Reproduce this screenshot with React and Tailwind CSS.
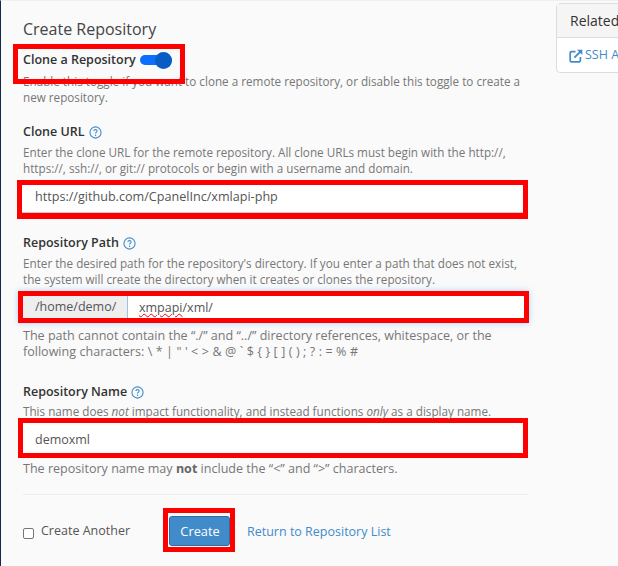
function HelpIcon() {
  return (
    <svg viewBox="0 0 14 14" className="ml-[4px] h-[13px] w-[13px] text-[#428bca]" fill="none">
      <circle cx="7" cy="7" r="6" stroke="currentColor" strokeWidth="1.2" />
      <path d="M5.2 5.5c0-1 .8-1.6 1.8-1.6s1.8.6 1.8 1.5c0 1.4-1.8 1.3-1.8 2.8" stroke="currentColor" strokeWidth="1.1" />
      <circle cx="7" cy="10" r=".8" fill="currentColor" />
    </svg>
  );
}

function LinkIcon() {
  return (
    <svg viewBox="0 0 14 14" className="mr-[2px] h-[14px] w-[14px] shrink-0" fill="none" stroke="currentColor">
      <path d="M6.5 2.6H2.4a1.2 1.2 0 0 0-1.2 1.2v7.8a1.2 1.2 0 0 0 1.2 1.2h7.8a1.2 1.2 0 0 0 1.2-1.2V8" strokeWidth="1.7" />
      <path d="M5.4 8.6 11.6 2.4" strokeWidth="2" />
      <path d="M8 .7h5.3V6z" fill="currentColor" stroke="none" />
    </svg>
  );
}

function FieldLabel({ children }) {
  return (
    <div className="flex items-center text-[12.5px] leading-[18px] font-semibold whitespace-nowrap text-[#333]">
      {children}
      <HelpIcon />
    </div>
  );
}

function Hint({ children, className = '' }) {
  return <p className={`leading-4 whitespace-nowrap text-[#777] ${className}`}>{children}</p>;
}

export default function App() {
  return (
    <div className="relative h-[566px] w-[618px] overflow-hidden border-t border-l border-t-[#f0f0f0] border-l-[#16284a] bg-[#fafafa] font-['Open_Sans',sans-serif]">
      <div className="flex items-start">
        <main className="ml-[22px] w-[505px] shrink-0 pt-[18px]">
          <h1 className="text-[16px] leading-5 text-[#444]">Create Repository</h1>

          <div className="relative mt-3 flex items-center">
            <span className="text-[12.5px] leading-[18px] font-semibold text-[#333]">Clone a Repository</span>
            <span className="relative ml-1 block h-[10px] w-[32px] rounded-full bg-[#0d6efd]">
              <span className="absolute top-[-3.5px] right-0 h-[17px] w-[17px] rounded-full bg-[#0a5cc5]" />
            </span>
            <div className="absolute top-[-7px] left-[-10px] h-10 w-[172px] border-[5px] border-[#f00]" />
          </div>
          <Hint className="mt-1 text-[11.7px]">
            Enable this toggle if you want to clone a remote repository, or disable this toggle to create a<br />
            new repository.
          </Hint>

          <div className="mt-[18px]">
            <FieldLabel>Clone URL</FieldLabel>
            <Hint className="mt-[3px] text-[11.7px]">
              Enter the clone URL for the remote repository. All clone URLs must begin with the http://,<br />
              https://, ssh://, or git:// protocols or begin with a username and domain.
            </Hint>
            <div className="mt-1 -ml-[6px] h-[39px] w-[511px] border-[5px] border-b-[6px] border-[#f00] bg-white">
              <div className="h-[28px] border-b border-[#ccc] pl-[13px] text-[12.6px] leading-[24px] text-[#555]">
                https://github.com/CpanelInc/xmlapi-php
              </div>
            </div>
          </div>

          <div className="mt-[15px]">
            <FieldLabel>Repository Path</FieldLabel>
            <Hint className="mt-[3px] text-[11.7px]">
              Enter the desired path for the repository's directory. If you enter a path that does not exist,<br />
              the system will create the directory when it creates or clones the repository.
            </Hint>
            <div className="mt-1 -ml-[5px] flex h-[32px] w-[511px] border-[5px] border-[#f00] bg-white text-[12.5px] text-[#555] shadow-[0_0_6px_rgba(102,175,233,0.5)]">
              <span className="w-[104px] bg-[#eee] pl-[12px] leading-[22px]">/home/demo/</span>
              <span className="border-l border-[#9cc3e5] pl-[11px] leading-[23px]">
                <span className="underline decoration-[#f00] decoration-wavy decoration-1">xmpapi</span>/xml/
              </span>
            </div>
            <Hint className="mt-[5px] text-[12.55px]">
              The path cannot contain the “./” and “../” directory references, whitespace, or the<br />
              <span className="[word-spacing:0.2px]">following characters: \ * | " ' &lt; &gt; &amp; @ ` $ {'{ }'} [ ] ( ) ; ? : = % #</span>
            </Hint>
          </div>

          <div className="mt-[23px]">
            <FieldLabel>Repository Name</FieldLabel>
            <Hint className="mt-[2px] text-[11.7px]">
              This name does <em>not</em> impact functionality, and instead functions <em>only</em> as a display name.
            </Hint>
            <div className="-mt-px -ml-[5px] h-10 w-[510px] border-[5px] border-[#f00] bg-white pl-[12px] text-[12.5px] leading-[34px] text-[#555]">
              demoxml
            </div>
            <Hint className="mt-[3px] text-[12.55px]">
              The repository name may <strong className="font-bold text-[#666]">not</strong> include the “&lt;” and “&gt;” characters.
            </Hint>
          </div>

          <div className="mt-[17px] flex items-center border-t border-[#eee] pt-[13px]">
            <span className="mt-[6px] h-[11px] w-[11px] rounded-[2px] border border-[#767676] bg-white" />
            <span className="mt-[2px] ml-[7px] text-[12.5px] text-[#555]">Create Another</span>
            <div className="ml-[33px] border-[5px] border-[#f00] pt-[3px] pb-px pl-px">
              <button className="block h-[30px] w-[61px] rounded-[3px] border border-[#2e6da4] bg-[#428bca] pt-px pl-px text-[12.8px] text-white">Create</button>
            </div>
            <a className="mt-1 ml-[12px] text-[12.5px] text-[#428bca]">Return to Repository List</a>
          </div>
        </main>

        <aside className="mt-[2px] ml-[28px] h-[70px] w-[120px] shrink-0 rounded-[4px] border border-[#ddd] bg-white">
          <div className="h-[34px] border-b border-[#ddd] bg-[#f5f5f5] pl-[13px] text-[14px] leading-[33px] text-[#333]">Related</div>
          <div className="flex h-[34px] items-center pt-px pl-[12px] text-[12.5px] whitespace-nowrap text-[#428bca]">
            <LinkIcon />
            SSH Access
          </div>
        </aside>
      </div>
    </div>
  );
}
